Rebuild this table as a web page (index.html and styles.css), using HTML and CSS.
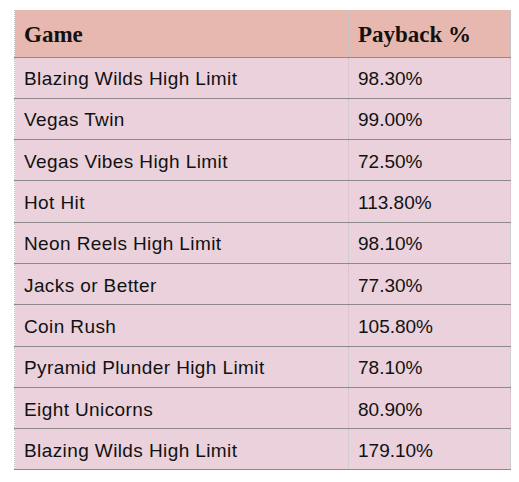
FILE: index.html
```html
<!DOCTYPE html>
<html>
<head>
<meta charset="utf-8">
<link rel="stylesheet" href="styles.css">
</head>
<body>
<table class="payback">
  <thead>
    <tr><th class="col-game">Game</th><th class="col-pay">Payback %</th></tr>
  </thead>
  <tbody>
    <tr><td class="name">Blazing Wilds High Limit</td><td class="pct">98.30%</td></tr>
    <tr><td class="name">Vegas Twin</td><td class="pct">99.00%</td></tr>
    <tr><td class="name">Vegas Vibes High Limit</td><td class="pct">72.50%</td></tr>
    <tr><td class="name">Hot Hit</td><td class="pct">113.80%</td></tr>
    <tr><td class="name">Neon Reels High Limit</td><td class="pct">98.10%</td></tr>
    <tr><td class="name">Jacks or Better</td><td class="pct">77.30%</td></tr>
    <tr><td class="name">Coin Rush</td><td class="pct">105.80%</td></tr>
    <tr><td class="name">Pyramid Plunder High Limit</td><td class="pct">78.10%</td></tr>
    <tr><td class="name">Eight Unicorns</td><td class="pct">80.90%</td></tr>
    <tr><td class="name">Blazing Wilds High Limit</td><td class="pct">179.10%</td></tr>
  </tbody>
</table>
</body>
</html>
```
FILE: styles.css
```css
html, body {
  margin: 0;
  padding: 0;
  background: #ffffff;
}
body {
  padding: 10px 0 0 14px;
}
.payback {
  border-collapse: collapse;
  width: 496px;
  table-layout: fixed;
  color: #111;
}
.payback thead tr {
  height: 47px;
}
.payback tbody tr {
  height: 41.3px;
}
.payback th,
.payback td {
  box-sizing: border-box;
  padding: 0 0 0 9px;
  text-align: left;
  border-left: 1px dotted #c4c4c4;
  border-right: 1px dotted #c4c4c4;
  border-bottom: 1px solid #8e8a8c;
  vertical-align: middle;
}
.payback th {
  background: #e6b8af;
  font-family: "Liberation Serif", "Times New Roman", serif;
  font-weight: bold;
  font-size: 23px;
  padding-top: 4px;
}
.payback td {
  background: #ead1dc;
  font-family: "Liberation Sans", Arial, sans-serif;
  font-size: 19px;
  padding-top: 3px;
}
.payback td.name {
  letter-spacing: 0.4px;
}
.col-game { width: 334px; }
.col-pay { width: 162px; }
```
